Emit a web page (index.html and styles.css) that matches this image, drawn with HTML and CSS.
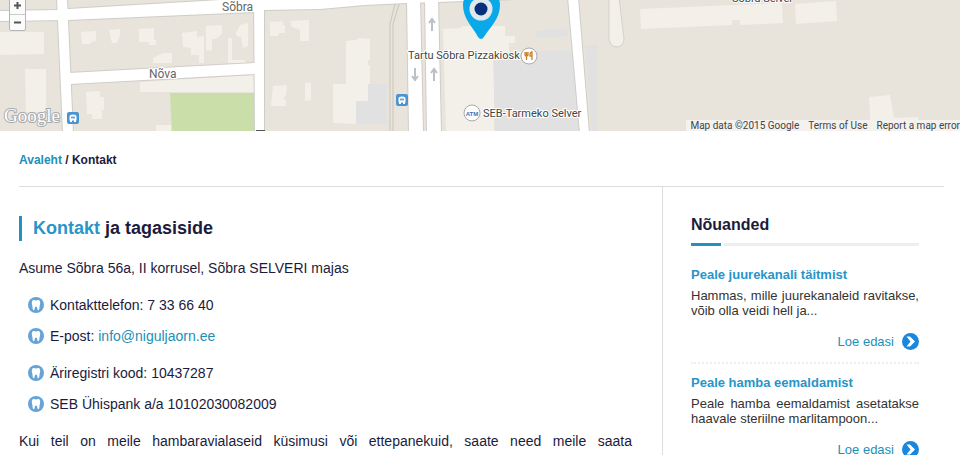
FILE: index.html
```html
<!DOCTYPE html>
<html lang="et">
  <head>
    <meta charset="UTF-8" />
    <meta name="viewport" content="width=device-width, initial-scale=1.0" />
    <title>Kontakt</title>
    <link rel="stylesheet" href="styles.css">
  </head>
  <body>
    <!-- Shared icons -->
    <svg class="sprite" aria-hidden="true">
      <symbol id="tooth" viewBox="0 0 16 16">
        <circle cx="8" cy="8" r="8" fill="#66a3d6" />
        <path d="M4 4.500C4.700 2.600 6.500 2.900 8 3.600C9.500 2.900 11.300 2.600 12 4.500C12.500 6 11.900 7.500 11.600 9C11.300 11 11.600 13.200 10.300 13.200C9 13.200 9.600 9.400 8 9.400C6.400 9.400 7 13.200 5.700 13.200C4.400 13.200 4.700 11 4.400 9C4.100 7.500 3.500 6 4 4.500Z" fill="#fff" />
      </symbol>
      <symbol id="arrow" viewBox="0 0 17 17">
        <circle cx="8.500" cy="8.500" r="8.500" fill="#1b87dc" />
        <path d="M4.500 3.500H8L13 8.500L8 13.500H4.500L8.500 8.500Z" fill="#fff" />
      </symbol>
      <symbol id="bus" viewBox="0 0 12 12">
        <rect width="12" height="12" rx="2" fill="#4c94cf" />
        <path d="M2.500 8.500V4.500Q2.500 2.500 6 2.500T9.500 4.500V8.500ZM3 8H5V10H3ZM7 8H9V10H7Z" fill="#fff" />
        <path d="M4 4.500H8V6.500H4Z" fill="#6fa9d9" />
      </symbol>
      <g id="roads">
        <path d="M-2 11L57 10L68 9L254 -2V-9H577L568 -3L438 2L407 3L365 5L320 9L264 10L255 12L68 20L-2 21Z" />
        <path d="M57 -2H67L73 133H63Z" />
        <path d="M68 73L255 63V74L70 84Z" />
        <path d="M254 -2H264V133H255Z" />
        <path d="M407 -2H420L423 133H409Z" />
        <path d="M425 -2H438L441 133H427Z" />
        <path d="M568 -3H578L589 133H580Z" />
      </g>
    </svg>

    <div class="map">
      <svg class="map__canvas" viewBox="0 0 960 131" preserveAspectRatio="xMidYMid slice" role="img" aria-label="Sõbra 56a, Tartu">
        <rect width="960" height="131" fill="#e8e4dc" />

        <!-- Buildings -->
        <g fill="#f3f0e9">
          <path d="M0 32H44V54L0 55ZM25 69H46V112H26ZM81 32L96 31V41L91 42V44H82ZM109 30L120 29V35L117 43H112ZM139 29L154 28V40H156V45H149V42H139ZM182 33L197 31V37L204 36V63H199V55H191V48L183 47ZM206 26L222 25V34L216 39H212V50L206 51ZM236 33L240 25L248 23V46L243 48L241 37L237 36ZM228 38H232V60H245V63H228ZM153 58L163 53H172V63H153ZM140 82L254 75V92H140ZM86 92L100 91V97H104V110H102V119H92V114H87ZM156 125H171V131H156ZM270 22L283 21V25H285V33H279L278 36H270ZM291 21L309 20V41H300V30L291 26ZM273 86L287 85L286 95L284 97V100H286V106H271ZM305 83L311 82V100L305 101Z" />
          <path d="M346 41L357 40V38L370 39V60H368V65H370V102L356 101V124L333 123V84H346ZM443 29L461 28V26H505V36H515V43H509V54H494V131H446ZM640 9L782 3L783 23L740 25V20H732V25L641 29ZM795 4L836 1L837 21L796 24ZM869 97L890 95L894 118L918 117V131H871Z" />
        </g>
        <g fill="#e1e1e1">
          <path d="M368 84H387V124H356V101H368ZM493 54L582 49V131H495ZM535 31L568 28V36L536 38ZM585 45H598V131H592Z" />
        </g>
        <path d="M170 93H255V131H172Z" fill="#cadea9" />

        <!-- Roads: outline first, surface on top -->
        <use href="#roads" stroke="#cfcdc8" stroke-width="2" />
        <use href="#roads" fill="#fff" />
        <path d="M609 -3V40Q611 47 617 47Q624 46 624 39L619 -3" fill="#f3f0e9" stroke="#d3d0c8" />
        <path d="M395 4L390 24V133M399 4L393 24V133" fill="none" stroke="#c8c5bb" />
        <path d="M256 130H265V131H256Z" fill="#555" />

        <!-- One-way arrows -->
        <path d="M432 31V20M429 23L432 19L435 23M434 81V70M431 73L434 69L437 73M415 68V79M412 76L415 80L418 76" fill="none" stroke="#bcc0c6" stroke-width="2" />

        <use href="#bus" x="67" y="112" width="12" height="12" />
        <use href="#bus" x="396" y="94" width="12" height="12" />

        <g class="map__labels">
          <text class="map__street" x="222" y="11">Sõbra</text>
          <text class="map__street" x="149" y="78">Nõva</text>
          <text x="408" y="59">Tartu Sõbra Pizzakiosk</text>
          <text x="483" y="117">SEB-Tarmeko Selver</text>
          <text x="732" y="2">Sõbra Selver</text>
        </g>
        <text class="map__google" x="4" y="122">Google</text>

        <!-- Points of interest -->
        <g fill="#fff" stroke="#aaa">
          <circle cx="529" cy="56" r="8" />
          <circle cx="472" cy="113" r="8" />
        </g>
        <path d="M525 52V55Q526.500 57 528 55V52M526.500 52V60M532 60V52Q530 52 530 56H532" fill="none" stroke="#cb8129" stroke-width="1.300" />
        <text class="map__atm" x="472" y="116" text-anchor="middle">ATM</text>

        <!-- Clinic marker -->
        <path d="M463 5C463 -16 500 -16 500 5C500 19 490 27 484 37Q481 41 478 37C473 27 463 19 463 5Z" fill="#09a8e8" />
        <circle cx="481" cy="9" r="11.500" fill="#e1e8ed" />
        <circle cx="481" cy="9" r="6.500" fill="#062f7c" />
      </svg>

      <div class="map__zoom">
        <button type="button" aria-label="Zoom in"><svg width="9" height="9"><path d="M1 4.500H8M4.500 1V8" /></svg></button>
        <button type="button" aria-label="Zoom out"><svg width="9" height="9"><path d="M1 4.500H8" /></svg></button>
      </div>
      <div class="map__credits">
        <span>Map data ©2015 Google</span>
        <a href="#">Terms of Use</a>
        <a href="#">Report a map error</a>
      </div>
    </div>

    <div class="page">
      <nav class="breadcrumb"><a href="#">Avaleht</a> / Kontakt</nav>

      <div class="columns">
        <main class="content">
          <h1 class="content__title"><span>Kontakt</span> ja tagasiside</h1>
          <p>Asume Sõbra 56a, II korrusel, Sõbra SELVERI majas</p>
          <ul class="contacts">
            <li><svg><use href="#tooth" /></svg>Kontakttelefon: 7 33 66 40</li>
            <li><svg><use href="#tooth" /></svg><span>E-post: <a href="#">info@niguljaorn.ee</a></span></li>
          </ul>
          <ul class="contacts">
            <li><svg><use href="#tooth" /></svg>Äriregistri kood: 10437287</li>
            <li><svg><use href="#tooth" /></svg>SEB Ühispank a/a 10102030082009</li>
          </ul>
          <p class="content__intro">Kui teil on meile hambaravialaseid küsimusi või ettepanekuid, saate need meile saata</p>
        </main>

        <aside class="advice">
          <h2 class="advice__title">Nõuanded</h2>
          <article class="advice__item">
            <h3><a href="#">Peale juurekanali täitmist</a></h3>
            <p>Hammas, mille juurekanaleid ravitakse, võib olla veidi hell ja...</p>
            <a class="advice__more" href="#">Loe edasi <svg><use href="#arrow" /></svg></a>
          </article>
          <article class="advice__item">
            <h3><a href="#">Peale hamba eemaldamist</a></h3>
            <p>Peale hamba eemaldamist asetatakse haavale steriilne marlitampoon...</p>
            <a class="advice__more" href="#">Loe edasi <svg><use href="#arrow" /></svg></a>
          </article>
        </aside>
      </div>
    </div>
  </body>
</html>
```
FILE: styles.css
```css
/* General Styles */
* {
  box-sizing: border-box;
}

body {
  margin: 0;
  font-family: "Liberation Sans", Arial, sans-serif;
  font-size: 14px;
  line-height: 18px;
  color: #1b1b3d;
  background-color: #fff;
}

h1,
h2,
h3,
p,
ul {
  margin: 0;
  padding: 0;
}

a {
  color: #2190b8;
  text-decoration: none;
}

.sprite {
  display: none;
}

/* Map */
.map {
  position: relative;
  height: 131px;
  overflow: hidden;
  font-family: Roboto, sans-serif;
}

.map__canvas {
  display: block;
  width: 100%;
  height: 100%;
}

.map__labels {
  font-size: 11px;
  fill: #444;
  stroke: #fff;
  stroke-width: 2px;
  paint-order: stroke;
}

.map__street {
  font-size: 12px;
  fill: #666;
}

.map__atm {
  font-family: "Liberation Sans", Arial, sans-serif;
  font-size: 6px;
  font-weight: bold;
  fill: #3f6fb5;
}

.map__google {
  font-family: "Liberation Serif", serif;
  font-size: 19px;
  fill: #fff;
  stroke: #aaa;
  stroke-width: 2px;
  paint-order: stroke;
}

.map__zoom {
  position: absolute;
  top: -5px;
  left: 9px;
  width: 17px;
  border: 1px solid #b5b5b5;
  border-radius: 2px;
  background-color: #fbfbfb;
}

.map__zoom button {
  display: flex;
  align-items: center;
  justify-content: center;
  width: 100%;
  height: 18px;
  padding: 0;
  border: 0;
  background: none;
}

.map__zoom button + button {
  height: 16px;
  border-top: 1px solid #ccc;
}

.map__zoom path {
  fill: none;
  stroke: #555;
  stroke-width: 2px;
}

.map__credits {
  position: absolute;
  right: 0;
  bottom: 0;
  display: flex;
  gap: 9px;
  padding-left: 4px;
  font-size: 10px;
  line-height: 11px;
  color: #444;
  background-color: #f3f2ef;
}

.map__credits a {
  color: #444;
}

/* Page */
.page {
  padding: 20px 16px 0 19px;
}

.breadcrumb {
  padding-bottom: 17px;
  border-bottom: 1px solid #ddd;
  font-size: 12px;
  font-weight: bold;
}

.columns {
  display: flex;
}

/* Content */
.content {
  flex: 1;
  padding: 29px 30px 0 0;
}

.content__title {
  margin-bottom: 18px;
  padding-left: 11px;
  border-left: 3px solid #2190c2;
  font-size: 18px;
  line-height: 25px;
}

.content__title span {
  color: #2795c9;
}

.contacts {
  display: flex;
  flex-direction: column;
  gap: 13px;
  margin-top: 19px;
  padding-left: 9px;
  list-style: none;
}

.contacts li {
  display: flex;
  align-items: center;
  gap: 6px;
}

.contacts svg {
  width: 16px;
  height: 16px;
}

.content__intro {
  margin-top: 19px;
  text-align: justify;
  text-align-last: justify;
}

/* Advice */
.advice {
  width: 282px;
  padding: 28px 25px 0 28px;
  border-left: 1px solid #ddd;
}

.advice__title {
  font-size: 16px;
  line-height: 20px;
}

.advice__title::after {
  content: "";
  display: block;
  height: 3px;
  margin: 8px 0 20px;
  background: linear-gradient(to right, #2190c2 30px, #fff 30px, #fff 33px, #eee 33px);
}

.advice__item {
  margin-bottom: 10px;
  padding-bottom: 12px;
  border-bottom: 2px dotted #eee;
  font-size: 13px;
  line-height: 15px;
}

.advice__item h3 {
  margin-bottom: 5px;
  font-size: 13px;
  line-height: 17px;
}

.advice__item h3 a {
  color: #2795c9;
}

.advice__item p {
  text-align: justify;
  color: #333;
}

.advice__more {
  display: flex;
  align-items: center;
  justify-content: flex-end;
  gap: 8px;
  margin-top: 15px;
}

.advice__more svg {
  width: 17px;
  height: 17px;
}
```
